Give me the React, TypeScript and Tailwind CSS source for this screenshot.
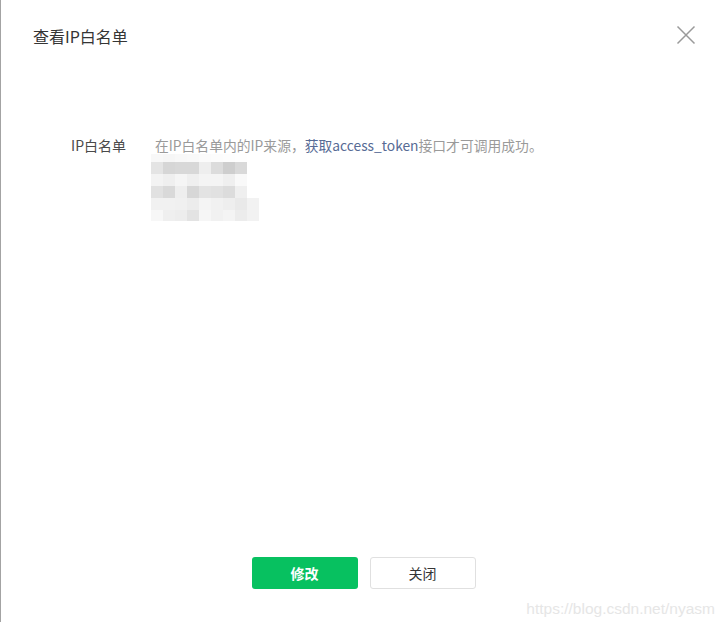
import React from "react";

const rows: string[][] = [
  ["bg-[#f8f8f8]", "bg-[#f6f6f6]", "bg-[#f8f8f8]", "bg-[#f9f9f9]", "bg-[#fbfbfb]", "bg-[#fcfcfc]", "bg-[#fdfdfd]", "bg-[#fefefe]"],
  ["bg-[#e4e4e4]", "bg-[#d6d6d6]", "bg-[#d8d8d8]", "bg-[#d8d8d8]", "bg-[#eeeeee]", "bg-[#dcdcdc]", "bg-[#cecece]", "bg-[#d9d9d9]"],
  ["bg-[#f3f3f3]", "bg-[#efefef]", "bg-[#f5f5f5]", "bg-[#efefef]", "bg-[#f4f4f4]", "bg-[#f4f4f4]", "bg-[#efefef]", "bg-[#f9f9f9]"],
  ["bg-[#e1e1e1]", "bg-[#d9d9d9]", "bg-[#eeeeee]", "bg-[#d7d7d7]", "bg-[#e3e3e3]", "bg-[#e1e1e1]", "bg-[#dcdcdc]", "bg-[#efefef]"],
  ["bg-[#f1f1f1]", "bg-[#f1f1f1]", "bg-[#f0f0f0]", "bg-[#ececec]", "bg-[#f4f4f4]", "bg-[#f1f1f1]", "bg-[#eeeeee]", "bg-[#e9e9e9]", "bg-[#f2f2f2]"],
  ["bg-[#f7f7f7]", "bg-[#efefef]", "bg-[#ededed]", "bg-[#e3e3e3]", "bg-[#f6f6f6]", "bg-[#f1f1f1]", "bg-[#f4f4f4]", "bg-[#ececec]", "bg-[#f2f2f2]"],
];

const rowHeights = ["h-[8px]", "h-[12px]", "h-[12px]", "h-[12px]", "h-[12px]", "h-[11px]"];

export default function App() {
  return (
    <div
      className="relative flex h-[622px] w-[725px] flex-col overflow-hidden border-l border-[#a3a3a3] bg-white"
      style={{ fontFamily: '"Noto Sans CJK SC", "Noto Sans", sans-serif' }}
    >
      <div className="flex items-start justify-between pl-[32px] pr-[29px] pt-[25px]">
        <div className="text-[16px] leading-[22px] text-[#353535]">查看IP白名单</div>
        <svg width="20" height="20" viewBox="0 0 20 20">
          <path d="M1.5 1.5 L18.5 18.5 M18.5 1.5 L1.5 18.5" stroke="#9a9a9a" strokeWidth="1.5" fill="none" />
        </svg>
      </div>

      <div className="mt-[89px] flex">
        <div className="w-[125px] text-right text-[14px] leading-[18px] text-[#4a4a4a]">IP白名单</div>
        <div className="ml-[29px] flex flex-col">
          <div className="text-[13.8px] leading-[18px] text-[#9a9a9a]">
            在IP白名单内的IP来源，<span className="text-[#576b95]">获取access_token</span>接口才可调用成功。
          </div>
          <div className="ml-[-4px] flex flex-col">
            {rows.map((r, i) => (
              <div key={i} className={`flex ${rowHeights[i]}`}>
                {r.map((c, j) => (
                  <div key={j} className={`w-[12px] ${c}`} />
                ))}
              </div>
            ))}
          </div>
        </div>
      </div>

      <div className="flex-1" />

      <div className="flex justify-center gap-[12px] pb-[33px] pl-[1px]">
        <button className="h-[32px] w-[106px] rounded-[3px] bg-[#07c160] text-[14px] font-bold text-white">修改</button>
        <button className="h-[32px] w-[106px] rounded-[3px] border border-[#e0e0e0] bg-white text-[14px] text-[#353535]">关闭</button>
      </div>

      <div
        className="absolute bottom-[4px] right-[10px] text-[15.5px] leading-[18px] text-[#e6e6e6]"
        style={{ fontFamily: '"Liberation Sans", Arial, sans-serif' }}
      >
        https://blog.csdn.net/nyasm
      </div>
    </div>
  );
}
